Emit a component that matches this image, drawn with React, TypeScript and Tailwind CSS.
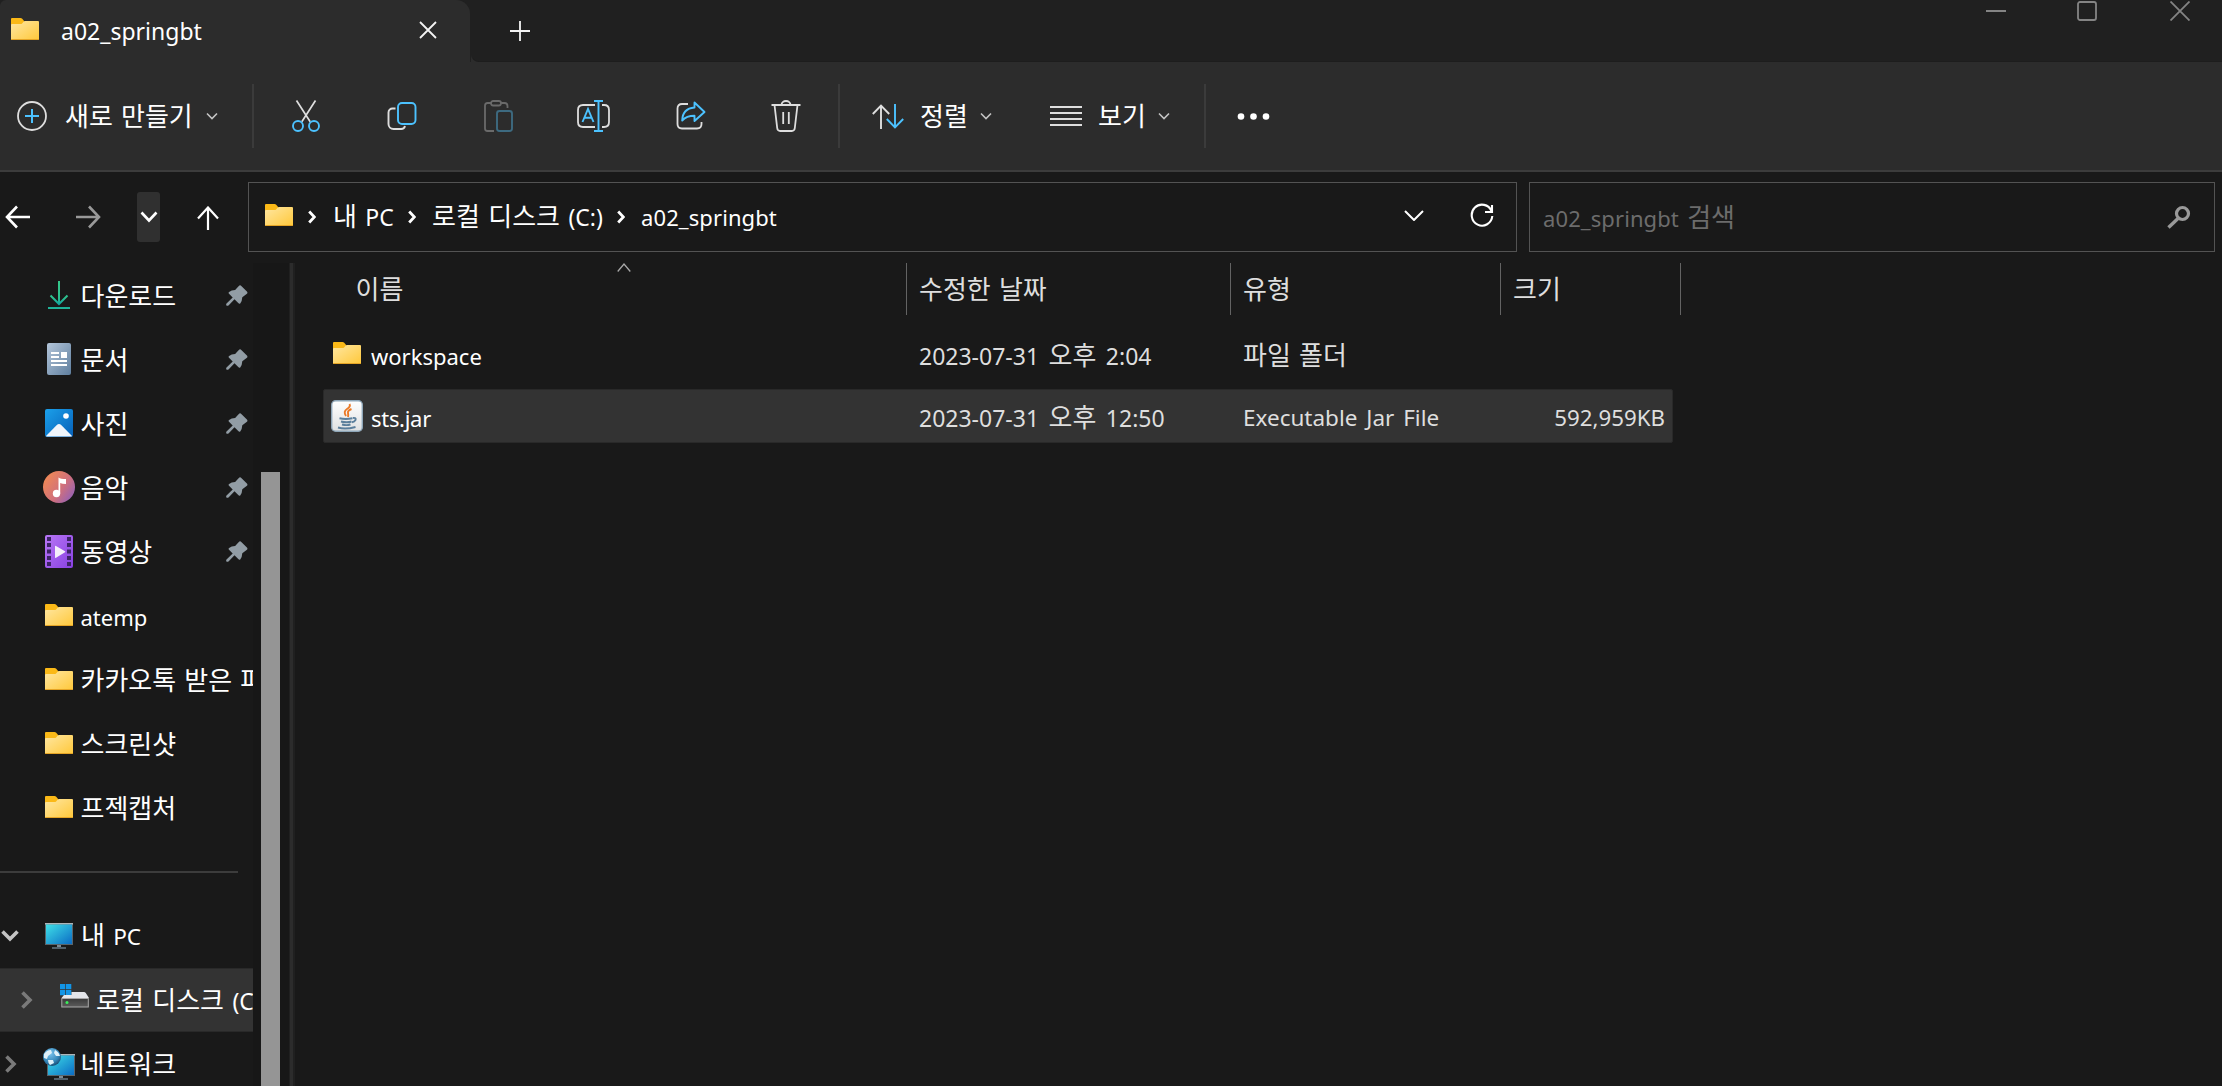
import type { ReactNode } from "react";

const HANGUL = /([\uac00-\ud7a3]+)/;

/** Text whose Hangul runs are set one size larger than the Latin ones. */
function T({ children, className = "" }: { children: string; className?: string }) {
  return (
    <span className={"block shrink-0 whitespace-nowrap pt-[2px] leading-[30px] [word-spacing:2.4px] " + className}>
      {children.split(HANGUL).map((run, i) =>
        HANGUL.test(run) ? (
          <span key={i} className="font-['Noto_Sans_CJK_KR',sans-serif] text-[26px] leading-[0px] tracking-normal">
            {run}
          </span>
        ) : (
          run
        ),
      )}
    </span>
  );
}

function Icon({ w, h, className = "", children }: { w: number; h: number; className?: string; children: ReactNode }) {
  return (
    <svg width={w} height={h} viewBox={`0 0 ${w} ${h}`} fill="none" className={"block shrink-0 " + className}>
      {children}
    </svg>
  );
}

function Folder({ className = "" }: { className?: string }) {
  return (
    <Icon w={28} h={22} className={className}>
      <path d="M0 1a1 1 0 0 1 1-1h8.500q1 0 1.700.8L13.500 3.500V10H0z" fill="#fbb917" />
      <path d="M0 7q0-1 1-1h8.500q1 0 1.600-.6l1.500-1.700q.7-.7 1.600-.7H27q1 0 1 1v17q0 1-1 1H1q-1 0-1-1z" fill="url(#folderFace)" />
      <path d="M0 21h28q0 1-1 1H1q-1 0-1-1z" fill="#e5a425" />
    </Icon>
  );
}

function Gradients() {
  return (
    <svg width="0" height="0" className="absolute">
      <defs>
        <linearGradient id="folderFace" x1="0" y1="0" x2="1" y2="1">
          <stop offset="0" stopColor="#ffe7a2" />
          <stop offset="1" stopColor="#ffc83a" />
        </linearGradient>
        <linearGradient id="screen" x1="0" y1="0" x2="1" y2="1">
          <stop offset="0" stopColor="#3fe0e8" />
          <stop offset="1" stopColor="#0b6cc4" />
        </linearGradient>
        <linearGradient id="download" x1="0" y1="0" x2="0" y2="28" gradientUnits="userSpaceOnUse">
          <stop offset="0" stopColor="#35c88a" />
          <stop offset="0.600" stopColor="#2cc08e" />
          <stop offset="0.850" stopColor="#10a3a3" />
          <stop offset="1" stopColor="#24b896" />
        </linearGradient>
        <linearGradient id="doc" x1="0" y1="0" x2="1" y2="1">
          <stop offset="0" stopColor="#b4c6da" />
          <stop offset="1" stopColor="#5f7f9f" />
        </linearGradient>
        <linearGradient id="photo" x1="0" y1="0" x2="1" y2="1">
          <stop offset="0" stopColor="#1ba0ea" />
          <stop offset="1" stopColor="#0660b8" />
        </linearGradient>
        <linearGradient id="music" x1="0" y1="0.200" x2="1" y2="0.900">
          <stop offset="0" stopColor="#f28a53" />
          <stop offset="0.550" stopColor="#d0707c" />
          <stop offset="1" stopColor="#8a5fc0" />
        </linearGradient>
        <linearGradient id="video" x1="0" y1="0" x2="1" y2="1">
          <stop offset="0" stopColor="#b877f5" />
          <stop offset="1" stopColor="#8840e2" />
        </linearGradient>
        <linearGradient id="jar" x1="0" y1="0" x2="0" y2="1">
          <stop offset="0" stopColor="#ffffff" />
          <stop offset="1" stopColor="#dfe1e2" />
        </linearGradient>
        <linearGradient id="drive" x1="0" y1="0" x2="0" y2="1">
          <stop offset="0" stopColor="#3a3a3a" />
          <stop offset="1" stopColor="#5c5c5c" />
        </linearGradient>
        <radialGradient id="globe" cx="0.400" cy="0.300" r="0.700">
          <stop offset="0" stopColor="#7cc4ee" />
          <stop offset="0.700" stopColor="#3486b8" />
          <stop offset="1" stopColor="#1c5078" />
        </radialGradient>
      </defs>
    </svg>
  );
}

function SmallChevron() {
  return (
    <Icon w={12} h={8}>
      <path d="M1 1.500l5 5 5-5" stroke="#c4c4c4" strokeWidth="1.600" />
    </Icon>
  );
}

function Crumb() {
  return (
    <Icon w={8} h={14}>
      <path d="M1.200 1.500L6.400 7l-5.200 5.500" stroke="#fff" strokeWidth="2.800" />
    </Icon>
  );
}

const G = "#dedede";
const B = "#4cc2ff";

function TitleBar() {
  return (
    <div className="flex h-[62px] bg-[#2c2c2c] text-white">
      <div className="w-[471px] shrink-0 bg-[#202020]">
        <div className="flex h-[62px] w-[470px] items-center rounded-tl-[6px] rounded-tr-[14px] bg-[#2c2c2c]">
          <Folder className="ml-[11px] -mt-[4px]" />
          <T className="ml-[22px] -mt-[2px] w-[356px] text-[23px]">a02_springbt</T>
          <Icon w={18} h={18} className="ml-[2px] -mt-[3px]">
            <path d="M1 1l16 16M17 1L1 17" stroke="#f4f4f4" strokeWidth="1.800" />
          </Icon>
        </div>
      </div>
      <div className="flex flex-1 rounded-bl-[8px] border-b border-[#1d1d1d] bg-[#202020]">
        <Icon w={20} h={20} className="ml-[39px] mt-[21px]">
          <path d="M10 0v20M0 10h20" stroke="#f4f4f4" strokeWidth="1.800" />
        </Icon>
        <div className="flex-1" />
        <Icon w={20} h={2} className="mt-[10px]">
          <path d="M0 1h20" stroke="#848484" strokeWidth="2" />
        </Icon>
        <Icon w={20} h={20} className="ml-[71px] mt-[1px]">
          <rect x="1" y="1" width="18" height="18" rx="2" stroke="#848484" strokeWidth="1.800" />
        </Icon>
        <Icon w={20} h={20} className="ml-[73px] mr-[32px] mt-[1px]">
          <path d="M.5.500l19 19M19.500.500l-19 19" stroke="#848484" strokeWidth="1.800" />
        </Icon>
      </div>
    </div>
  );
}

function Rule({ className }: { className: string }) {
  return <div className={"h-[64px] w-[2px] shrink-0 bg-[#3b3b3b] " + className} />;
}

function Toolbar() {
  return (
    <div className="flex h-[110px] items-center border-b-2 border-[#3c3c3c] bg-[#2c2c2c] text-white">
      <Icon w={30} h={30} className="ml-[17px]">
        <circle cx="15" cy="15" r="14" stroke={G} strokeWidth="1.800" />
        <path d="M15 8v14M8 15h14" stroke={B} strokeWidth="2" />
      </Icon>
      <T className="ml-[18px] w-[141px] text-[22px]">새로 만들기</T>
      <SmallChevron />
      <Rule className="ml-[34px]" />
      <Icon w={28} h={32} className="ml-[38px]">
        <path d="M4.500.500l13.700 21.200M23.500.500L9.800 21.700" stroke={G} strokeWidth="1.700" />
        <circle cx="6" cy="26" r="5" stroke={B} strokeWidth="1.900" />
        <circle cx="22" cy="26" r="5" stroke={B} strokeWidth="1.900" />
      </Icon>
      <Icon w={30} h={30} className="ml-[67px]">
        <path d="M8.500 7.500H5.500a4 4 0 0 0-4 4V23a5 5 0 0 0 5 5h7.500a4 4 0 0 0 4-3" stroke={G} strokeWidth="1.900" />
        <rect x="11" y="2" width="17.500" height="21" rx="4" stroke={B} strokeWidth="1.900" />
      </Icon>
      <Icon w={30} h={32} className="ml-[67px]">
        <path d="M7 3H3.500Q1 3 1 5.500v23Q1 31 3.500 31H10M17 3h3.500q3 0 3 3v2" stroke="#6a6a6a" strokeWidth="1.800" />
        <rect x="7" y="1" width="10" height="4.500" rx="2.200" stroke="#6a6a6a" strokeWidth="1.800" />
        <rect x="13" y="11" width="15" height="20" rx="2.500" stroke="#3d6a80" strokeWidth="1.900" />
      </Icon>
      <Icon w={34} h={32} className="ml-[63px]">
        <path d="M18 5H6q-5 0-5 5v12q0 5 5 5h12M25 5h2q5 0 5 5v12q0 5-5 5h-2" stroke={G} strokeWidth="1.800" />
        <path d="M5.500 22L11 9l5.500 13M7.500 17.800h7M17 1h9M17 31h9M21.500 1v30" stroke={B} strokeWidth="1.900" />
      </Icon>
      <Icon w={30} h={30} className="ml-[65px]">
        <path d="M12 3H6Q1.500 3 1.500 7.500V23Q1.500 27.500 6 27.500h15q4.500 0 4.500-4.500v-2" stroke={G} strokeWidth="1.800" />
        <path d="M18.500 1.500L28.500 11l-10 9v-5.200q-8 0-12.300 4.700Q6.500 7.500 18.500 6.500z" stroke={B} strokeWidth="1.900" strokeLinejoin="round" />
      </Icon>
      <Icon w={30} h={32} className="ml-[65px]">
        <path
          d="M.5 5h29M3.500 5l2.700 23q.3 3 3 3h11.600q2.700 0 3-3L26.500 5M10.500 5a4.500 4 0 0 1 9 0M12.200 12v12M17.800 12v12"
          stroke={G}
          strokeWidth="1.800"
        />
      </Icon>
      <Rule className="ml-[37px]" />
      <Icon w={32} h={25} className="ml-[32px]">
        <path d="M9 25V1.500M.8 10L9 1.500 17.200 10" stroke={G} strokeWidth="1.900" />
        <path d="M23 0v23.500M14.800 15l8.200 8.500 8.200-8.500" stroke={B} strokeWidth="1.900" />
      </Icon>
      <T className="ml-[16px] w-[60px] text-[22px]">정렬</T>
      <SmallChevron />
      <Icon w={32} h={21} className="ml-[58px]">
        <path d="M0 1h32M0 7h32M0 13h32M0 19h32" stroke={G} strokeWidth="2" />
      </Icon>
      <T className="ml-[16px] w-[60px] text-[22px]">보기</T>
      <SmallChevron />
      <Rule className="ml-[34px]" />
      <Icon w={34} h={8} className="ml-[31px]">
        <circle cx="4" cy="4.500" r="3.300" fill="#fff" />
        <circle cx="16.500" cy="4.500" r="3.300" fill="#fff" />
        <circle cx="29" cy="4.500" r="3.300" fill="#fff" />
      </Icon>
    </div>
  );
}

function NavBar() {
  return (
    <div className="flex h-[91px] pt-[10px] text-[22px] text-white">
      <div className="flex h-[70px] w-[248px] shrink-0 items-center">
        <Icon w={25} h={24} className="ml-[5px]">
          <path d="M25 12H2M12 1.500L2 12l10 10.500" stroke="#fff" strokeWidth="2.600" />
        </Icon>
        <Icon w={25} h={24} className="ml-[46px]">
          <path d="M0 12h23M13 1.500L23 12 13 22.500" stroke="#999" strokeWidth="2.600" />
        </Icon>
        <div className="ml-[36px] flex h-[50px] w-[23px] items-center justify-center rounded-[3px] bg-[#303030]">
          <Icon w={18} h={12}>
            <path d="M1.500 1.500L9 9.500l7.500-8" stroke="#fff" strokeWidth="2.600" />
          </Icon>
        </div>
        <Icon w={22} h={24} className="ml-[37px] mt-[2px]">
          <path d="M11 24V1.500M1 12.500l10-11 10 11" stroke="#fff" strokeWidth="2.200" />
        </Icon>
      </div>
      <div className="flex h-[70px] w-[1269px] shrink-0 items-center border border-[#535353]">
        <Folder className="ml-[16px] -mt-[4px]" />
        <div className="w-[15px]" />
        <Crumb />
        <T className="-mt-[2px] ml-[17px] w-[75px] text-[23px]">내 PC</T>
        <Crumb />
        <T className="-mt-[2px] ml-[16px] w-[185px] text-[23px]">로컬 디스크 (C:)</T>
        <Crumb />
        <T className="-mt-[3px] ml-[16px] tracking-[0.100px]">a02_springbt</T>
        <div className="flex-1" />
        <Icon w={20} h={11} className="-mt-[3px]">
          <path d="M1 1l9 9 9-9" stroke="#fff" strokeWidth="2" />
        </Icon>
        <Icon w={24} h={26} className="ml-[46px] mr-[22px] -mt-[3px]">
          <path d="M21.500 8A10.300 10.500 0 1 0 22.300 13M22 2v7h-7" stroke="#fff" strokeWidth="2.100" />
        </Icon>
      </div>
      <div className="ml-[12px] flex h-[70px] w-[686px] shrink-0 items-center border border-[#535353] text-[#6c6c6c]">
        <T className="ml-[13px] tracking-[0.100px]">a02_springbt 검색</T>
        <div className="flex-1" />
        <Icon w={24} h={24} className="mr-[23px]">
          <circle cx="15.500" cy="8.500" r="6" stroke="#999" strokeWidth="3.200" />
          <path d="M11.500 13L1.500 22.500" stroke="#999" strokeWidth="3.400" />
        </Icon>
      </div>
    </div>
  );
}

function Pin() {
  return (
    <Icon w={22} h={22} className="mr-[5px] mt-[1px]">
      <path
        d="M12.600 1.200q1.400-1.500 2.700-.3l5.600 5.600q1.200 1.300-.3 2.500l-4.300 3.200q-.2 3.600-1.900 6-.9 1-1.900.1l-4-4-6 6.200q-1.300.7-2 0t0-2l6.200-5.900-3.700-3.800q-1-1 .1-1.900 2.300-1.600 6-1.800z"
        fill="#929da5"
      />
    </Icon>
  );
}

function Monitor() {
  return (
    <>
      <rect x="0" y="0" width="28" height="22" fill="#59646b" />
      <path d="M0 0h28v1.500H0z" fill="#aeb6ba" />
      <rect x="1" y="1.500" width="26" height="19.500" fill="url(#screen)" />
      <path d="M12 22h4v2h-4z" fill="#7b8a94" />
      <path d="M7 24h14v2H7z" fill="#52606a" />
    </>
  );
}

const icons: Record<string, ReactNode> = {
  download: (
    <Icon w={22} h={28}>
      <path d="M11 0v23M2.500 14.500l8.500 8.500 8.500-8.500M0 27h22" stroke="url(#download)" strokeWidth="2" />
    </Icon>
  ),
  doc: (
    <Icon w={24} h={32}>
      <rect width="24" height="32" rx="2" fill="url(#doc)" />
      <path d="M4 9h8v2H4zM14 9h6v6h-6zM4 13h8v2H4zM4 17h16v2H4zM4 21h16v2H4z" fill="#fff" />
    </Icon>
  ),
  photo: (
    <Icon w={28} h={28}>
      <rect width="28" height="28" rx="2" fill="url(#photo)" />
      <circle cx="21" cy="7" r="2.800" fill="#fff" />
      <path d="M1 27L11.800 16q2.200-2.200 4.400 0L27 27q-.5.500-1 .5H2q-.5 0-1-.5z" fill="#f0f5fb" />
    </Icon>
  ),
  music: (
    <Icon w={32} h={32}>
      <circle cx="16" cy="16" r="16" fill="url(#music)" />
      <circle cx="13.500" cy="22.500" r="3.700" fill="#fff" />
      <path d="M15.500 6.500q2 1.500 7.500 1.500v5q-4 0-5.800-1v10.500h-1.700z" fill="#fff" />
    </Icon>
  ),
  video: (
    <Icon w={28} h={33}>
      <rect width="28" height="33" rx="2" fill="url(#video)" />
      <path
        d="M2 2h4v4H2zM2 8h4v4H2zM2 14.500h4v4H2zM2 21h4v4H2zM2 27h4v4H2zM22 2h4v4h-4zM22 8h4v4h-4zM22 14.500h4v4h-4zM22 21h4v4h-4zM22 27h4v4h-4z"
        fill="#3d2466"
      />
      <path d="M10 11.500q0-1.200 1-.6l9 5.300q.8.500 0 1l-9 5.500q-1 .6-1-.5z" fill="#f4effa" />
    </Icon>
  ),
  folder: <Folder />,
  pc: (
    <Icon w={28} h={26}>
      <Monitor />
    </Icon>
  ),
  drive: (
    <Icon w={30} h={24}>
      <path d="M0 0h5.300v5.300H0zM6 0h5.300v5.300H6zM0 6h5.300v5.300H0zM6 6h5.300v5.300H6z" fill="#1295e6" />
      <path d="M11.500 8H24q1 0 1.800 1l3.200 5H1.500L4 11h7.500z" fill="#e4e6ea" />
      <rect x="1.800" y="14.500" width="26.500" height="8.500" fill="url(#drive)" stroke="#a8a8a8" strokeWidth="1" />
      <circle cx="7" cy="18.500" r="1.500" fill="#3bf05a" />
    </Icon>
  ),
  network: (
    <Icon w={32} h={32}>
      <g transform="translate(4 6)">
        <Monitor />
      </g>
      <circle cx="9" cy="9" r="9" fill="url(#globe)" />
      <path d="M1 6q3-4 7-4l1 3-4 3-1 3-3-1zM12 2q4 2 5 6l-4 0-2-3zM5 12l5 0 1 3-4 2q-2-2-2-5z" fill="#dff0f8" />
    </Icon>
  ),
};

const quick = [
  { icon: "download", label: "다운로드", pinned: true },
  { icon: "doc", label: "문서", pinned: true },
  { icon: "photo", label: "사진", pinned: true },
  { icon: "music", label: "음악", pinned: true },
  { icon: "video", label: "동영상", pinned: true },
  { icon: "folder", label: "atemp", pinned: false },
  { icon: "folder", label: "카카오톡 받은 파일", pinned: false },
  { icon: "folder", label: "스크린샷", pinned: false },
  { icon: "folder", label: "프젝캡처", pinned: false },
];

function Sidebar() {
  return (
    <div className="flex w-[289px] shrink-0 overflow-hidden text-[22px] text-white">
      <div className="w-[253px] shrink-0 overflow-hidden">
        {quick.map((q) => (
          <div key={q.label} className="flex h-[64px] items-center">
            <div className="ml-[43px] flex w-[32px] shrink-0 justify-center">{icons[q.icon]}</div>
            <T className="ml-[5.500px] mt-[1px]">{q.label}</T>
            <div className="flex-1" />
            {q.pinned && <Pin />}
          </div>
        ))}
        <div className="flex h-[65px] items-center">
          <div className="h-[2px] w-[238px] bg-[#3c3c3c]" />
        </div>
        <div className="flex h-[64px] items-center">
          <Icon w={18} h={12} className="ml-[1px]">
            <path d="M1.500 1.500L9 9l7.500-7.500" stroke="#c4c4c4" strokeWidth="3.600" />
          </Icon>
          <div className="ml-[24px] flex w-[32px] shrink-0 justify-center">{icons.pc}</div>
          <T className="ml-[6px] text-[22.600px]">내 PC</T>
        </div>
        <div className="flex h-[64px] items-center border-y border-[#292929] bg-[#333]">
          <Icon w={12} h={18} className="ml-[21px]">
            <path d="M1.500 1.500L9 9l-7.500 7.500" stroke="#7a7a7a" strokeWidth="3.600" />
          </Icon>
          <div className="ml-[27px] -mt-[8px] w-[30px] shrink-0">{icons.drive}</div>
          <T className="-mt-[1px] ml-[6px] text-[23px]">로컬 디스크 (C:)</T>
        </div>
        <div className="flex h-[64px] items-center">
          <Icon w={12} h={18} className="ml-[5px]">
            <path d="M1.500 1.500L9 9l-7.500 7.500" stroke="#7a7a7a" strokeWidth="3.600" />
          </Icon>
          <div className="ml-[26px] w-[32px] shrink-0">{icons.network}</div>
          <T className="-mt-[1px] ml-[5.500px]">네트워크</T>
        </div>
      </div>
      <div className="w-[36px] shrink-0 bg-[#171717] pl-[8px] pt-[209px]">
        <div className="h-full w-[19px] bg-[#959595]" />
      </div>
    </div>
  );
}

function JarIcon() {
  return (
    <Icon w={32} h={32}>
      <rect x="0.700" y="0.700" width="30.600" height="30.600" rx="4" fill="url(#jar)" stroke="#8ea6b8" strokeWidth="1.400" />
      <path d="M18.500 4q1.500 2.500-2.500 5t-1 7M20.500 9q-4 1.500-3.500 4t0 4" stroke="#ea7a28" strokeWidth="1.900" />
      <path
        d="M8.500 18.300q6 1.400 13 0M10 21.500q6 1.600 10.500 0M11 24.500q4.500 1.200 8.500 0M7 27.500q7 2.300 17.500-.5M22 18q3.500-.5 2.500 2-1 1.800-3.500 2.300"
        stroke="#5b7f9c"
        strokeWidth="1.900"
      />
    </Icon>
  );
}

function FileList() {
  return (
    <div className="min-w-0 flex-1 text-[22px] text-[#dedede]">
      <div className="flex h-[52px]">
        <div className="flex w-[612px] shrink-0 border-r border-[#636363]">
          <T className="ml-[60.500px] mt-[10px] w-[261.500px]">이름</T>
          <Icon w={14} h={9}>
            <path d="M.7 8.500L7 1l6.300 7.500" stroke="#a8a8a8" strokeWidth="1.300" />
          </Icon>
        </div>
        <T className="h-full w-[324px] border-r border-[#636363] pl-[12px] pt-[12px]">수정한 날짜</T>
        <T className="h-full w-[270px] border-r border-[#636363] pl-[12px] pt-[12px]">유형</T>
        <T className="h-full w-[180px] border-r border-[#636363] pl-[12px] pt-[12px]">크기</T>
      </div>
      <div className="ml-[28px] mt-[14px] flex h-[53px] w-[1350px] items-center">
        <Folder className="ml-[10px] -mt-[5px]" />
        <T className="-mt-[1px] ml-[10px] w-[548px] text-white">workspace</T>
        <T className="-mt-[1px] w-[324px] text-[23px] [word-spacing:3.500px]">2023-07-31 오후 2:04</T>
        <T className="-mt-[1px]">파일 폴더</T>
      </div>
      <div className="ml-[28px] mt-[7px] flex h-[54px] w-[1350px] items-center rounded-[2px] border border-[#292929] bg-[#333]">
        <div className="ml-[7px]">
          <JarIcon />
        </div>
        <T className="mt-[1px] ml-[8px] w-[548px] tracking-[-0.300px] text-white">sts.jar</T>
        <T className="mt-[2px] w-[324px] text-[23px] [word-spacing:3.500px]">2023-07-31 오후 12:50</T>
        <T className="mt-[2px] w-[220px] text-[22.500px] [word-spacing:3px]">Executable Jar File</T>
        <T className="mr-[7px] mt-[2px] flex-1 text-right text-[22.300px]">592,959KB</T>
      </div>
    </div>
  );
}

export default function App() {
  return (
    <div className="flex h-[1086px] w-[2222px] flex-col overflow-hidden bg-[#191919] font-['Noto_Sans',sans-serif]">
      <Gradients />
      <TitleBar />
      <Toolbar />
      <NavBar />
      <div className="flex min-h-0 flex-1">
        <Sidebar />
        <div className="w-[6px] shrink-0 border-l border-r-2 border-[#202020] bg-[#2c2c2c]" />
        <FileList />
      </div>
    </div>
  );
}
